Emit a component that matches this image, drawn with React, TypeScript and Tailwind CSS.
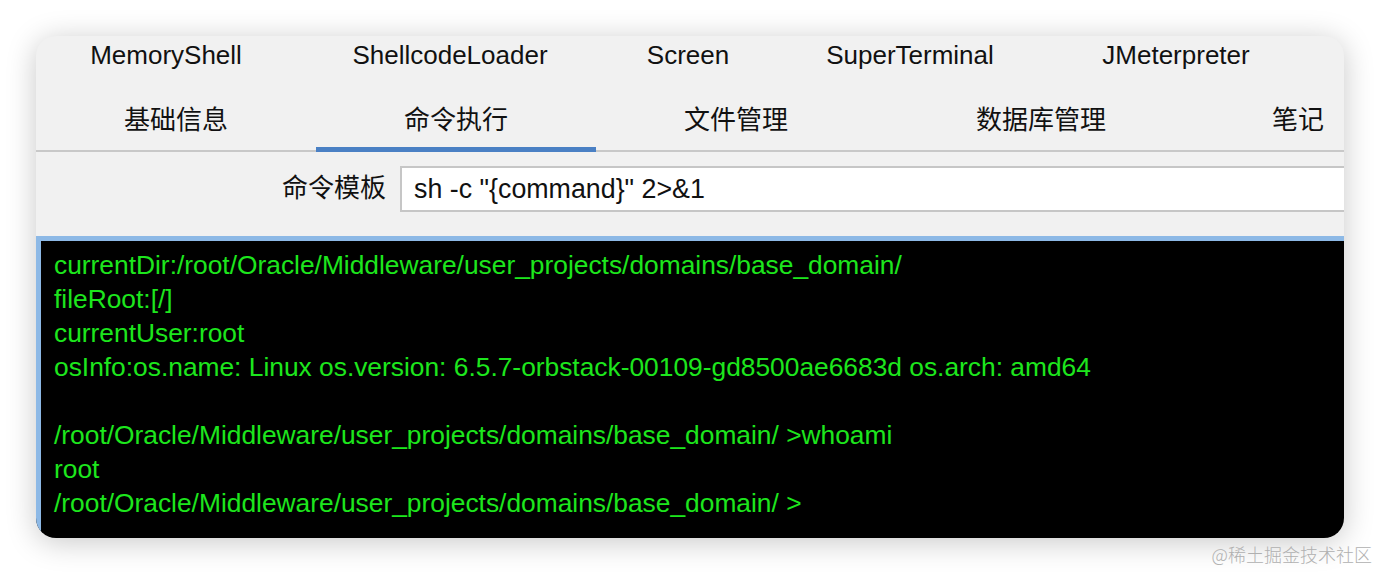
import React from "react";

const topTabs = [
  { label: "MemoryShell", w: "w-[260px]" },
  { label: "ShellcodeLoader", w: "w-[308px]" },
  { label: "Screen", w: "w-[168px]" },
  { label: "SuperTerminal", w: "w-[276px]" },
  { label: "JMeterpreter", w: "w-[256px]" },
];

const mainTabs = [
  { label: "基础信息", w: "w-[280px]", active: false },
  { label: "命令执行", w: "w-[280px]", active: true },
  { label: "文件管理", w: "w-[280px]", active: false },
  { label: "数据库管理", w: "w-[330px]", active: false },
  { label: "笔记", w: "w-[184px]", active: false },
];

const lines = [
  "currentDir:/root/Oracle/Middleware/user_projects/domains/base_domain/",
  "fileRoot:[/]",
  "currentUser:root",
  "osInfo:os.name: Linux os.version: 6.5.7-orbstack-00109-gd8500ae6683d os.arch: amd64",
  "",
  "/root/Oracle/Middleware/user_projects/domains/base_domain/ >whoami",
  "root",
  "/root/Oracle/Middleware/user_projects/domains/base_domain/ >",
];

const App = () => {
  return (
    <div className="relative h-[574px] w-[1380px] overflow-hidden bg-white pl-[36px] pt-[36px] font-['Liberation_Sans','Noto_Sans_CJK_SC',sans-serif]">
      <div className="flex h-[502px] w-[1308px] flex-col overflow-hidden rounded-[20px] bg-[#f1f1f1] shadow-[0_4px_30px_rgba(0,0,0,0.22)]">
        {/* plugin tabs */}
        <div className="flex h-[40px] shrink-0 items-center pb-[2px] text-[26px] text-[#111]">
          {topTabs.map((t) => (
            <div key={t.label} className={`${t.w} shrink-0 text-center leading-none`}>
              {t.label}
            </div>
          ))}
        </div>

        {/* main tabs */}
        <div className="mt-[12px] flex h-[64px] shrink-0 border-b-2 border-[#c8c8c8] text-[26px] text-[#111]">
          {mainTabs.map((t) => (
            <div
              key={t.label}
              className={`${t.w} -mb-[2px] flex shrink-0 items-center justify-center pt-[4px] leading-none ${
                t.active ? "border-b-[5px] border-[#4a80c4]" : "border-b-[5px] border-transparent"
              }`}
            >
              {t.label}
            </div>
          ))}
        </div>

        {/* command template */}
        <div className="flex h-[84px] shrink-0 items-start pt-[14px]">
          <div className="w-[364px] shrink-0 pr-[14px] text-right text-[26px] leading-[45px] text-[#111]">
            命令模板
          </div>
          <div className="flex h-[46px] flex-1 items-center border-y-2 border-l-2 border-[#c6c6c6] bg-white pl-[12px] text-[26.8px] text-[#111]">
            sh -c "{"{command}"}" 2&gt;&amp;1
          </div>
        </div>

        {/* terminal */}
        <div className="flex-1 border-l-[5px] border-t-[5px] border-[#8db9e6] bg-black pl-[13px] pt-[7px] text-[26.35px] leading-[34px] text-[#1de61d]">
          {lines.map((l, i) => (
            <div key={i} className="h-[34px] whitespace-pre">
              {l}
            </div>
          ))}
        </div>
      </div>

      <div className="absolute bottom-[6px] right-[8px] font-['Noto_Sans_CJK_SC',sans-serif] text-[18px] font-light text-[#b0b0b0]">
        @稀土掘金技术社区
      </div>
    </div>
  );
};

export default App;
